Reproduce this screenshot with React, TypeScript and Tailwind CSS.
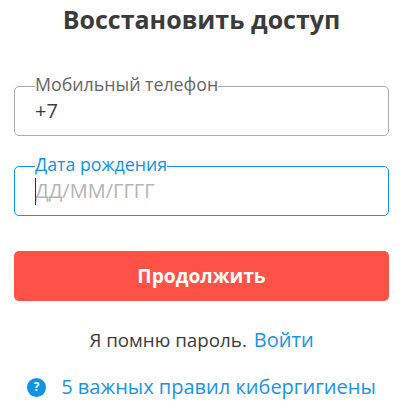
import React from 'react';

const font = "font-['Open_Sans',sans-serif]";

const App: React.FC = () => {
  return (
    <div className={`${font} w-[415px] h-[410px] overflow-hidden bg-white flex flex-col pl-[14px] pr-[26px]`}>
      <h1 className="text-[25px] leading-[32px] font-bold text-[#3b3b3b] text-center mt-[3px]">
        Восстановить доступ
      </h1>

      {/* Phone */}
      <fieldset className="mt-[41px] h-[60px] border border-[#aaaaaa] rounded-[5px] px-[20px]">
        <legend className="h-[20px] text-[17.8px] leading-[17px] text-[#666666] p-0">Мобильный телефон</legend>
        <div className="text-[20px] leading-[24px] text-[#3b3b3b] mt-[3px]">+7</div>
      </fieldset>

      {/* Birth date */}
      <fieldset className="mt-[20px] h-[60px] border border-[#0f94e3] rounded-[5px] px-[20px]">
        <legend className="h-[20px] text-[17.8px] leading-[17px] text-[#0f94e3] p-0">Дата рождения</legend>
        <div className="relative text-[20px] leading-[24px] text-[#b5b5b5] mt-[3px]">
          <span className="absolute left-0 top-[-1px] w-px h-[27px] bg-[#333333]" />
          ДД/ММ/ГГГГ
        </div>
      </fieldset>

      <button className="mt-[35px] h-[50px] w-full rounded-[5px] bg-[#ff5247] text-white text-[19.2px] font-bold">
        Продолжить
      </button>

      <div className="mt-[26px] flex justify-center items-center gap-[7px] text-[18.8px] leading-[26px]">
        <span className="text-[#3b3b3b]">Я помню пароль.</span>
        <a className="text-[#1a94e6] text-[20px]">Войти</a>
      </div>

      <div className="mt-[21px] flex justify-center items-center gap-[15px] text-[20px] leading-[26px]">
        <span className="w-[19px] h-[19px] rounded-full bg-[#0f94e3] text-white text-[12px] font-bold flex items-center justify-center">?</span>
        <a className="text-[#1a94e6]">5 важных правил кибергигиены</a>
      </div>
    </div>
  );
};

export default App;
